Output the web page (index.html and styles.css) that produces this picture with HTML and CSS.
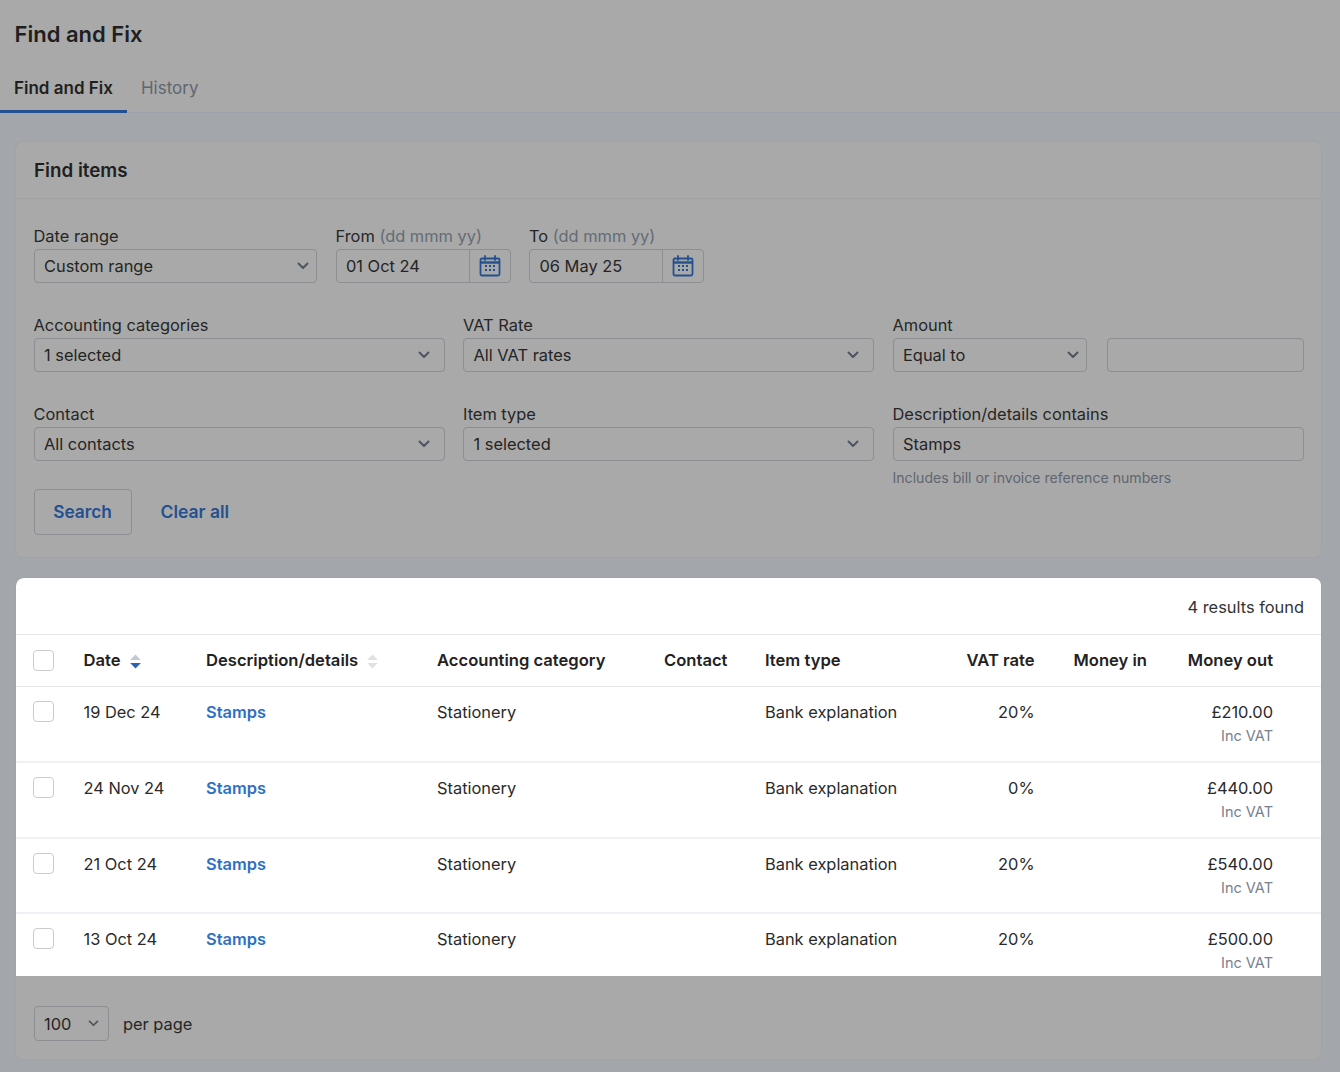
FILE: index.html
```html
<!DOCTYPE html>
<html lang="en">
<head>
<meta charset="utf-8">
<title>Find and Fix</title>
<link rel="stylesheet" href="styles.css">
</head>
<body>
<svg class="defs" width="0" height="0" aria-hidden="true">
  <symbol id="chev" viewBox="0 0 12 8"><path d="M1.500 1.500 6 6l4.500-4.500" fill="none" stroke="currentColor" stroke-width="2" stroke-linecap="round" stroke-linejoin="round"/></symbol>
  <symbol id="cal" viewBox="0 0 22 22">
    <rect x="1.500" y="3.500" width="19" height="17" rx="1.500" fill="none" stroke="currentColor" stroke-width="1.800"/>
    <path d="M1.500 7.500h19" stroke="currentColor" stroke-width="2.400"/>
    <path d="M6 1v4M16 1v4" stroke="currentColor" stroke-width="1.800" stroke-linecap="round"/>
    <path d="M6 11h2M10 11h2M14 11h2M6 15h2M10 15h2M14 15h2" stroke="currentColor" stroke-width="2"/>
  </symbol>
  <symbol id="sort" viewBox="0 0 10 14"><path d="M5 .5 10 5.500H0Z" fill="var(--up)"/><path d="M0 8.500h10L5 13.500Z" fill="var(--down)"/></symbol>
</svg>
<header class="top">
  <h1 class="title">Find and Fix</h1>
  <nav class="tabs">
    <a class="tab active">Find and Fix</a>
    <a class="tab">History</a>
  </nav>
</header>
<main class="main">
  <section class="card find">
    <h2 class="card-head">Find items</h2>
    <div class="form">
      <div class="row row-dates">
        <div class="field">
          <label class="label">Date range</label>
          <div class="control select tight"><span>Custom range</span><svg class="chev"><use href="#chev"/></svg></div>
        </div>
        <div class="field">
          <label class="label">From <span class="muted">(dd mmm yy)</span></label>
          <div class="control date"><span class="date-value">01 Oct 24</span><span class="date-btn"><svg class="cal"><use href="#cal"/></svg></span></div>
        </div>
        <div class="field">
          <label class="label">To <span class="muted">(dd mmm yy)</span></label>
          <div class="control date"><span class="date-value">06 May 25</span><span class="date-btn"><svg class="cal"><use href="#cal"/></svg></span></div>
        </div>
      </div>
      <div class="row row-three">
        <div class="field">
          <label class="label">Accounting categories</label>
          <div class="control select"><span>1 selected</span><svg class="chev"><use href="#chev"/></svg></div>
        </div>
        <div class="field">
          <label class="label">VAT Rate</label>
          <div class="control select"><span>All VAT rates</span><svg class="chev"><use href="#chev"/></svg></div>
        </div>
        <div class="field">
          <label class="label">Amount</label>
          <div class="amount">
            <div class="control select tight"><span>Equal to</span><svg class="chev"><use href="#chev"/></svg></div>
            <div class="control"></div>
          </div>
        </div>
      </div>
      <div class="row row-three row-last">
        <div class="field">
          <label class="label">Contact</label>
          <div class="control select"><span>All contacts</span><svg class="chev"><use href="#chev"/></svg></div>
        </div>
        <div class="field">
          <label class="label">Item type</label>
          <div class="control select"><span>1 selected</span><svg class="chev"><use href="#chev"/></svg></div>
        </div>
        <div class="field">
          <label class="label">Description/details contains</label>
          <div class="control"><span>Stamps</span></div>
          <p class="hint">Includes bill or invoice reference numbers</p>
        </div>
      </div>
      <div class="actions">
        <button class="btn" type="button">Search</button>
        <a class="clear">Clear all</a>
      </div>
    </div>
  </section>
  <section class="card results">
    <div class="spot">
      <div class="count">4 results found</div>
      <table class="table">
        <colgroup>
          <col class="c1"><col class="c2"><col class="c3"><col class="c4"><col class="c5"><col class="c6"><col class="c7"><col class="c8"><col class="c9">
        </colgroup>
        <thead>
          <tr>
            <th class="check"><span class="box"></span></th>
            <th>Date <svg class="sort active-sort"><use href="#sort"/></svg></th>
            <th>Description/details <svg class="sort"><use href="#sort"/></svg></th>
            <th>Accounting category</th>
            <th>Contact</th>
            <th>Item type</th>
            <th class="num">VAT rate</th>
            <th class="in">Money in</th>
            <th class="num out">Money out</th>
          </tr>
        </thead>
        <tbody>
          <tr>
            <td class="check"><span class="box"></span></td><td>19 Dec 24</td><td><a class="link">Stamps</a></td><td>Stationery</td><td></td><td>Bank explanation</td><td class="num">20%</td><td class="in"></td>
            <td class="num out">£210.00<div class="sub">Inc VAT</div></td>
          </tr>
          <tr>
            <td class="check"><span class="box"></span></td><td>24 Nov 24</td><td><a class="link">Stamps</a></td><td>Stationery</td><td></td><td>Bank explanation</td><td class="num">0%</td><td class="in"></td>
            <td class="num out">£440.00<div class="sub">Inc VAT</div></td>
          </tr>
          <tr>
            <td class="check"><span class="box"></span></td><td>21 Oct 24</td><td><a class="link">Stamps</a></td><td>Stationery</td><td></td><td>Bank explanation</td><td class="num">20%</td><td class="in"></td>
            <td class="num out">£540.00<div class="sub">Inc VAT</div></td>
          </tr>
          <tr>
            <td class="check"><span class="box"></span></td><td>13 Oct 24</td><td><a class="link">Stamps</a></td><td>Stationery</td><td></td><td>Bank explanation</td><td class="num">20%</td><td class="in"></td>
            <td class="num out">£500.00<div class="sub">Inc VAT</div></td>
          </tr>
        </tbody>
      </table>
    </div>
    <div class="pager">
      <div class="control select per"><span>100</span><svg class="chev small"><use href="#chev"/></svg></div>
      <span class="per-label">per page</span>
    </div>
  </section>
</main>
</body>
</html>
```
FILE: styles.css
```css
* { box-sizing: border-box; }
html, body { margin: 0; padding: 0; }
body {
  width: 1340px;
  height: 1072px;
  overflow: hidden;
  background: #a3a6aa;
  color: #242424;
  font-family: Inter, "Liberation Sans", sans-serif;
  font-size: 16.400px;
  line-height: 24px;
}
.defs { position: absolute; }
.top { background: #a9a9a9; height: 113px; border-bottom: 1px solid #9ca1a9; }
.title { margin: 0; padding: 20px 14.500px 0; font-size: 22px; line-height: 28px; font-weight: 600; color: #1f1f1f; height: 64px; }
.tabs { display: flex; height: 48px; }
.tab { padding: 12px 14px 0; height: 49px; font-size: 17px; color: #5f6670; }
.tab.active { color: #1f1f1f; font-weight: 600; border-bottom: 3px solid #24508f; }
.main { padding: 28px 18px 0 15px; display: flex; flex-direction: column; gap: 19px; }
.card { background: #a9a9a9; border: 1px solid #a2a3a5; border-radius: 8px; width: 1307px; }
.find { height: 417px; }
.card-head { margin: 0; height: 57px; padding: 16px 18px 0; font-size: 18.800px; line-height: 26px; font-weight: 600; color: #1f1f1f; border-bottom: 1px solid #a1a1a1; }
.form { padding: 25px 18px 0 17.500px; }
.row { display: grid; column-gap: 18.500px; }
.row-dates { grid-template-columns: 283.500px 175px 175px; margin-bottom: 30px; }
.row-three { grid-template-columns: 411px 411px 411px; margin-bottom: 30px; }
.row-last { margin-bottom: 0; height: 85px; }
.field { min-width: 0; }
.label { display: block; height: 24.500px; line-height: 24px; white-space: nowrap; color: #262626; }
.muted { color: #646c76; }
.control {
  height: 34.500px;
  border: 1px solid #8c8e91;
  border-radius: 4px;
  padding: 0 9.500px;
  display: flex;
  align-items: center;
  justify-content: space-between;
  color: #242424;
  background: #a9a9a9;
}
.select { padding-right: 14px; }
.select.tight { padding-right: 7px; }
.chev { width: 12px; height: 8px; color: #4d5560; flex: none; }
.chev.small { width: 11px; height: 7px; }
.date { padding: 0; }
.date-value { padding-left: 9.500px; }
.date-btn { width: 41px; height: 100%; border-left: 1px solid #8c8e91; display: flex; align-items: center; justify-content: center; }
.cal { width: 22px; height: 22px; color: #24508f; }
.amount { display: grid; grid-template-columns: 194px 197px; column-gap: 20px; }
.hint { margin: 5px 0 0; font-size: 14.100px; line-height: 24px; color: #5f6670; white-space: nowrap; }
.actions { display: flex; align-items: center; gap: 29px; margin-top: 2px; }
.btn {
  width: 98px; height: 46px;
  background: #a9a9a9;
  border: 1px solid #8c8e91;
  border-radius: 4px;
  color: #24508f;
  font: 600 17.300px/24px Inter, "Liberation Sans", sans-serif;
  padding: 0;
}
.clear { color: #24508f; font-weight: 600; font-size: 17.500px; }
.results { height: 483px; overflow: hidden; }
.spot { background: #fff; border-radius: 8px 8px 0 0; height: 398px; width: 1306px; overflow: hidden; }
.count { height: 57px; padding: 17px 18px 0; text-align: right; border-bottom: 1px solid #e3e6ec; color: #333; }
.table { width: 1305px; table-layout: fixed; border-collapse: collapse; color: #2a2a2a; }
.c1 { width: 67.500px; } .c2 { width: 122.500px; } .c3 { width: 231px; } .c4 { width: 227px; } .c5 { width: 101px; } .c6 { width: 195.500px; } .c7 { width: 74px; } .c8 { width: 115.500px; } .c9 { width: 171px; }
th { height: 51px; padding: 0; text-align: left; font-size: 16.600px; font-weight: 600; white-space: nowrap; border-bottom: 1px solid #e3e6ec; color: #222; }
td { height: 75.500px; padding: 13px 0 0; vertical-align: top; white-space: nowrap; border-bottom: 2px solid #f0f1f4; }
tbody tr:first-child td { height: 76px; }
.check { padding-left: 17px; }
.box { display: block; width: 21px; height: 21px; border: 1px solid #c8ccd2; border-radius: 4px; background: #fff; }
td.check { padding-top: 14px; }
.num { text-align: right; }
.in { padding-left: 39px; }
.out { padding-right: 48px; }
.link { color: #2f6fc4; font-weight: 600; }
.sub { font-size: 14.500px; line-height: 24px; color: #76818f; }
.sort { width: 11px; height: 15px; margin-left: 5px; vertical-align: -3px; --up: #dfe1e4; --down: #dfe1e4; }
.active-sort { --up: #c3c9d2; --down: #2d62b3; }
.pager { display: flex; align-items: center; gap: 14px; padding: 30px 18px 0 17.500px; }
.per { width: 75.500px; height: 35px; padding-right: 9px; }
.per-label { color: #262626; }
```
